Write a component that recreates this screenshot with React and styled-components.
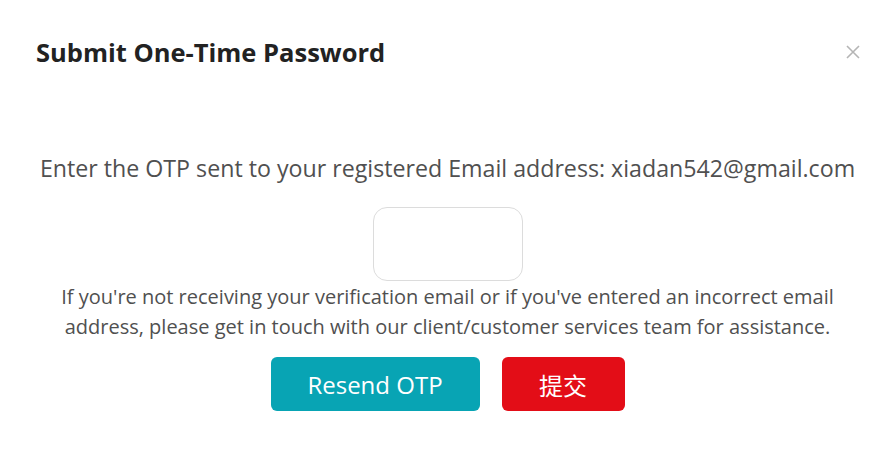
import React from 'react';
import styled, { createGlobalStyle } from 'styled-components';

const colors = {
  title: '#222222',
  text: '#505050',
  border: '#dcdcdc',
  close: '#b5b5b5',
  teal: '#08a4b4',
  red: '#e30d17',
  white: '#ffffff',
};

const GlobalStyle = createGlobalStyle`
  html, body {
    margin: 0;
    padding: 0;
    background: ${colors.white};
  }
  body {
    font-family: "Open Sans", "Noto Sans", "Noto Sans CJK SC", sans-serif;
  }
`;

const Modal = styled.div`
  width: 895px;
  height: 473px;
  box-sizing: border-box;
  display: flex;
  flex-direction: column;
  background: ${colors.white};
`;

const Header = styled.div`
  display: flex;
  align-items: center;
  justify-content: space-between;
  padding: 36px 34px 0 36px;
  height: 32px;
`;

const Title = styled.h2`
  margin: 0;
  font-size: 25.5px;
  font-weight: 700;
  color: ${colors.title};
`;

const CloseButton = styled.button`
  border: none;
  background: none;
  padding: 0;
  width: 16px;
  height: 16px;
  display: flex;
  align-items: center;
  justify-content: center;
  cursor: pointer;
`;

const Body = styled.div`
  display: flex;
  flex-direction: column;
  align-items: center;
  padding-top: 85px;
`;

const Prompt = styled.p`
  margin: 0;
  font-size: 23.2px;
  line-height: 30px;
  color: ${colors.text};
  text-align: center;
  white-space: nowrap;
`;

const OtpInput = styled.input`
  margin-top: 24px;
  width: 150px;
  height: 74px;
  box-sizing: border-box;
  border: 1px solid ${colors.border};
  border-radius: 14px;
  outline: none;
  font-size: 22px;
  text-align: center;
`;

const Notice = styled.p`
  margin: 1px 0 0;
  font-size: 20px;
  line-height: 30px;
  color: ${colors.text};
  text-align: center;
  max-width: 790px;
`;

const Actions = styled.div`
  display: flex;
  gap: 22px;
  margin-top: 15px;
`;

const ActionButton = styled.button`
  width: ${props => props.$width}px;
  height: 54px;
  border: none;
  border-radius: 6px;
  background: ${props => props.$color};
  color: ${colors.white};
  font-family: "Open Sans", "Noto Sans CJK SC", sans-serif;
  font-size: 24px;
  cursor: pointer;
`;

const App = () => (
  <>
    <GlobalStyle />
    <Modal>
      <Header>
        <Title>Submit One-Time Password</Title>
        <CloseButton aria-label="Close">
          <svg width="14" height="14" viewBox="0 0 14 14">
            <path d="M1 1L13 13M13 1L1 13" stroke={colors.close} strokeWidth="1.6" />
          </svg>
        </CloseButton>
      </Header>
      <Body>
        <Prompt>Enter the OTP sent to your registered Email address: xiadan542@gmail.com</Prompt>
        <OtpInput type="text" />
        <Notice>
          If you're not receiving your verification email or if you've entered an incorrect email
          address, please get in touch with our client/customer services team for assistance.
        </Notice>
        <Actions>
          <ActionButton $width={209} $color={colors.teal}>Resend OTP</ActionButton>
          <ActionButton $width={123} $color={colors.red}>提交</ActionButton>
        </Actions>
      </Body>
    </Modal>
  </>
);

export default App;
